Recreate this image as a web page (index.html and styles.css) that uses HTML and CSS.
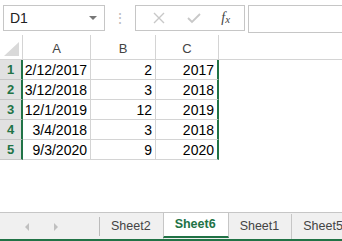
FILE: index.html
```html
<!DOCTYPE html>
<html lang="en">
<head>
  <meta charset="UTF-8">
  <title>Workbook</title>
  <link rel="stylesheet" href="styles.css">
</head>
<body>
  <div class="formula-bar">
    <div class="name-box">
      <span>D1</span>
      <span class="caret"></span>
    </div>
    <div class="dots">&#8942;</div>
    <div class="fx-box">
      <svg width="14" height="14" viewBox="0 0 14 14"><path d="M2 2 L12 12 M12 2 L2 12" stroke="#c8c8c8" stroke-width="1.4" fill="none"/></svg>
      <svg width="16" height="14" viewBox="0 0 16 14"><path d="M2 7 L6 11 L14 3" stroke="#c8c8c8" stroke-width="1.8" fill="none"/></svg>
      <span class="fx">f<sub>x</sub></span>
    </div>
    <div class="formula-input"></div>
  </div>

  <div class="sheet">
    <div class="corner"><span class="tri"></span></div>
    <div class="col-head">A</div>
    <div class="col-head">B</div>
    <div class="col-head">C</div>
    <div class="col-head blank"></div>

    <div class="row-head">1</div>
    <div class="cell">2/12/2017</div>
    <div class="cell">2</div>
    <div class="cell last">2017</div>
    <div class="cell blank"></div>

    <div class="row-head">2</div>
    <div class="cell">3/12/2018</div>
    <div class="cell">3</div>
    <div class="cell last">2018</div>
    <div class="cell blank"></div>

    <div class="row-head">3</div>
    <div class="cell">12/1/2019</div>
    <div class="cell">12</div>
    <div class="cell last">2019</div>
    <div class="cell blank"></div>

    <div class="row-head">4</div>
    <div class="cell">3/4/2018</div>
    <div class="cell">3</div>
    <div class="cell last">2018</div>
    <div class="cell blank"></div>

    <div class="row-head">5</div>
    <div class="cell">9/3/2020</div>
    <div class="cell">9</div>
    <div class="cell last">2020</div>
    <div class="cell blank"></div>
  </div>

  <div class="tabs">
    <div class="nav-arrows">
      <span class="arrow left"></span>
      <span class="arrow right"></span>
    </div>
    <div class="tab">Sheet2</div>
    <div class="tab active">Sheet6</div>
    <div class="tab">Sheet1</div>
    <div class="tab">Sheet5</div>
  </div>
</body>
</html>
```

FILE: styles.css
```css
body {
  margin: 0;
  width: 342px;
  height: 241px;
  overflow: hidden;
  background-color: #fff;
  font-family: "Liberation Sans", Arial, sans-serif;
  color: #000;
  display: flex;
  flex-direction: column;
}

/* Formula bar */
.formula-bar {
  display: flex;
  align-items: flex-start;
  padding: 5px 0 0 3px;
  height: 35px;
  box-sizing: border-box;
}

.name-box {
  width: 102px;
  height: 26px;
  box-sizing: border-box;
  border: 1px solid #c6c6c6;
  display: flex;
  align-items: center;
  justify-content: space-between;
  padding: 0 6px 0 6px;
  font-size: 14px;
  color: #222;
}

.caret {
  width: 0;
  height: 0;
  border-left: 4px solid transparent;
  border-right: 4px solid transparent;
  border-top: 4px solid #777;
  margin-right: 1px;
}

.dots {
  width: 30px;
  height: 26px;
  line-height: 26px;
  text-align: center;
  color: #bbb;
  font-size: 14px;
}

.fx-box {
  width: 110px;
  height: 26px;
  box-sizing: border-box;
  border: 1px solid #c6c6c6;
  display: flex;
  align-items: center;
  justify-content: space-around;
  padding: 0 4px 0 6px;
}

.fx {
  font-family: "Liberation Serif", serif;
  font-style: italic;
  font-size: 14px;
  color: #444;
}

.fx sub {
  font-size: 11px;
  vertical-align: -1px;
}

.formula-input {
  flex: 1;
  height: 26px;
  margin-left: 3px;
  border: 1px solid #c6c6c6;
  border-right: none;
}

/* Grid */
.sheet {
  display: grid;
  grid-template-columns: 23px 68px 65px 63px 1fr;
  grid-template-rows: 25px repeat(5, 20px);
  font-size: 14px;
}

.corner {
  border-right: 1px solid #d4d4d4;
  border-bottom: 1px solid #d4d4d4;
  position: relative;
}

.tri {
  position: absolute;
  right: 3px;
  bottom: 3px;
  width: 0;
  height: 0;
  border-left: 15px solid transparent;
  border-bottom: 14px solid #d9d9d9;
}

.col-head {
  border-right: 1px solid #d4d4d4;
  border-bottom: 1px solid #d4d4d4;
  text-align: center;
  color: #444;
  font-size: 13px;
  line-height: 22px;
  padding-top: 3px;
  box-sizing: border-box;
}

.col-head.blank {
  border-right: none;
}

.row-head {
  background-color: #e1e1e1;
  border-right: 2px solid #217346;
  border-bottom: 1px solid #c6c6c6;
  color: #217346;
  font-weight: bold;
  text-align: center;
  font-size: 13px;
  line-height: 20px;
}

.cell {
  border-right: 1px solid #d4d4d4;
  border-bottom: 1px solid #d4d4d4;
  text-align: right;
  padding-right: 3px;
  line-height: 20px;
}

.cell.last {
  border-right: 2px solid #217346;
}

.cell.blank {
  border-right: none;
  border-bottom: none;
}

/* Sheet tabs */
.tabs {
  margin-top: auto;
  height: 29px;
  box-sizing: border-box;
  background-color: #f0f0f0;
  border-top: 1px solid #c6c6c6;
  border-bottom: 2px solid #217346;
  display: flex;
  font-size: 12.5px;
  color: #444;
  overflow: hidden;
}

.nav-arrows {
  flex-shrink: 0;
  width: 100px;
  display: flex;
  align-items: center;
  gap: 25px;
  padding-left: 25px;
  box-sizing: border-box;
  border-right: 1px solid #bbb;
  margin: 4px 0 3px 0;
}

.arrow {
  width: 0;
  height: 0;
  border-top: 4px solid transparent;
  border-bottom: 4px solid transparent;
}

.arrow.left {
  border-right: 4px solid #c0c0c0;
}

.arrow.right {
  border-left: 4px solid #c0c0c0;
}

.tab {
  flex-shrink: 0;
  padding: 0 12px 0 11px;
  line-height: 24px;
  margin: 1px 0 0 0;
  border-right: 1px solid #c6c6c6;
}

.tab.active {
  background-color: #fff;
  color: #217346;
  font-weight: bold;
  border-left: 1px solid #c6c6c6;
  border-bottom: 2px solid #217346;
  margin: -1px 0 1px -1px;
  line-height: 25px;
}
```
